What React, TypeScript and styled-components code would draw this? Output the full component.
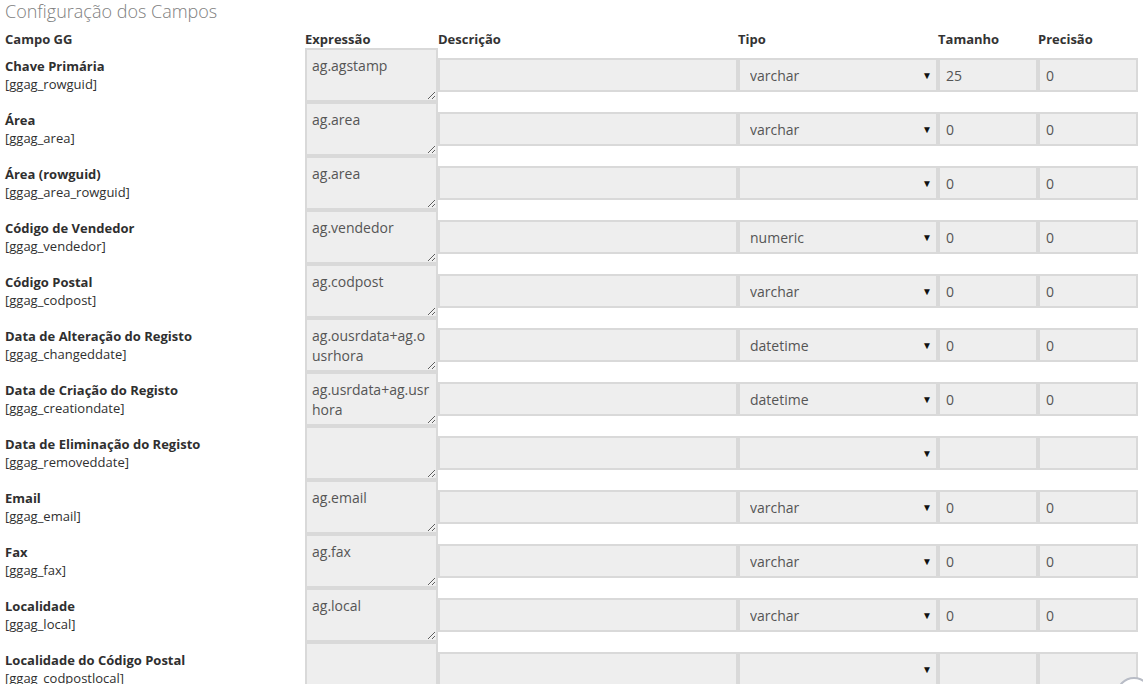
import React from "react";
import styled, { createGlobalStyle } from "styled-components";

interface IField {
  label: string;
  code: string;
  expr: string;
  type: string;
  size: string;
  precision: string;
}

const fields: IField[] = [
  { label: "Chave Primária", code: "ggag_rowguid", expr: "ag.agstamp", type: "varchar", size: "25", precision: "0" },
  { label: "Área", code: "ggag_area", expr: "ag.area", type: "varchar", size: "0", precision: "0" },
  { label: "Área (rowguid)", code: "ggag_area_rowguid", expr: "ag.area", type: "", size: "0", precision: "0" },
  { label: "Código de Vendedor", code: "ggag_vendedor", expr: "ag.vendedor", type: "numeric", size: "0", precision: "0" },
  { label: "Código Postal", code: "ggag_codpost", expr: "ag.codpost", type: "varchar", size: "0", precision: "0" },
  { label: "Data de Alteração do Registo", code: "ggag_changeddate", expr: "ag.ousrdata+ag.ousrhora", type: "datetime", size: "0", precision: "0" },
  { label: "Data de Criação do Registo", code: "ggag_creationdate", expr: "ag.usrdata+ag.usrhora", type: "datetime", size: "0", precision: "0" },
  { label: "Data de Eliminação do Registo", code: "ggag_removeddate", expr: "", type: "", size: "", precision: "" },
  { label: "Email", code: "ggag_email", expr: "ag.email", type: "varchar", size: "0", precision: "0" },
  { label: "Fax", code: "ggag_fax", expr: "ag.fax", type: "varchar", size: "0", precision: "0" },
  { label: "Localidade", code: "ggag_local", expr: "ag.local", type: "varchar", size: "0", precision: "0" },
  { label: "Localidade do Código Postal", code: "ggag_codpostlocal", expr: "", type: "", size: "", precision: "" },
];

const types = ["", "varchar", "numeric", "datetime"];

const GlobalStyle = createGlobalStyle`
  body {
    margin: 0;
    font-family: "Open Sans", "Liberation Sans", sans-serif;
    color: #333;
    background: #fff;
    overflow: hidden;
  }
`;

export default function App() {
  return (
    <>
      <GlobalStyle />
      <Page>
        <Title>Configuração dos Campos</Title>
        <HeaderRow>
          <span>Campo GG</span>
          <span>Expressão</span>
          <span>Descrição</span>
          <span>Tipo</span>
          <span>Tamanho</span>
          <span>Precisão</span>
        </HeaderRow>
        {fields.map((f) => (
          <FieldRow key={f.code}>
            <Label>
              <strong>{f.label}</strong>
              <span>[{f.code}]</span>
            </Label>
            <Expr defaultValue={f.expr} />
            <Input defaultValue="" />
            <SelectWrap>
              <Select defaultValue={f.type}>
                {types.map((t) => (
                  <option key={t} value={t}>
                    {t}
                  </option>
                ))}
              </Select>
            </SelectWrap>
            <Input defaultValue={f.size} />
            <Input defaultValue={f.precision} />
          </FieldRow>
        ))}
      </Page>
      <ScrollCircle />
    </>
  );
}

const Page = styled.div`
  padding: 0 5px;
  width: 1133px;
`;

const Title = styled.h3`
  margin: 0;
  height: 24px;
  font-size: 18px;
  font-weight: 300;
  color: #808080;
  line-height: 22px;
`;

const HeaderRow = styled.div`
  display: grid;
  grid-template-columns: 300px 133px 300px 200px 100px 100px;
  height: 24px;
  align-items: center;
  font-size: 13px;
  font-weight: 700;
  color: #333;
  span {
    padding-top: 6px;
  }
`;

const FieldRow = styled.div`
  display: grid;
  grid-template-columns: 300px 133px 300px 200px 100px 100px;
  align-items: center;
  height: 54px;
`;

const Label = styled.div`
  display: flex;
  flex-direction: column;
  font-size: 13px;
  line-height: 18px;
  color: #2f2f2f;
  strong {
    font-weight: 700;
  }
`;

const fieldBase = `
  box-sizing: border-box;
  width: 100%;
  background: #eeeeee;
  border: 2px solid #d9d9d9;
  font-family: "Open Sans", "Liberation Sans", sans-serif;
  font-size: 14px;
  color: #555;
  outline: none;
  margin: 0;
  border-radius: 0;
`;

const Expr = styled.textarea`
  ${fieldBase}
  height: 54px;
  padding: 6px 5px 0;
  line-height: 20px;
  resize: vertical;
  overflow: hidden;
`;

const Input = styled.input`
  ${fieldBase}
  height: 34px;
  padding: 0 6px;
`;

const SelectWrap = styled.div`
  position: relative;
  &::after {
    content: "▼";
    position: absolute;
    right: 6px;
    top: 10px;
    font-size: 10px;
    color: #111;
    pointer-events: none;
  }
`;

const Select = styled.select`
  ${fieldBase}
  height: 34px;
  padding: 0 10px;
  appearance: none;
  -webkit-appearance: none;
`;

const ScrollCircle = styled.div`
  position: fixed;
  left: 1116px;
  top: 677px;
  width: 32px;
  height: 32px;
  border: 2px solid #b8bcc6;
  border-radius: 50%;
  background: #fff;
`;
